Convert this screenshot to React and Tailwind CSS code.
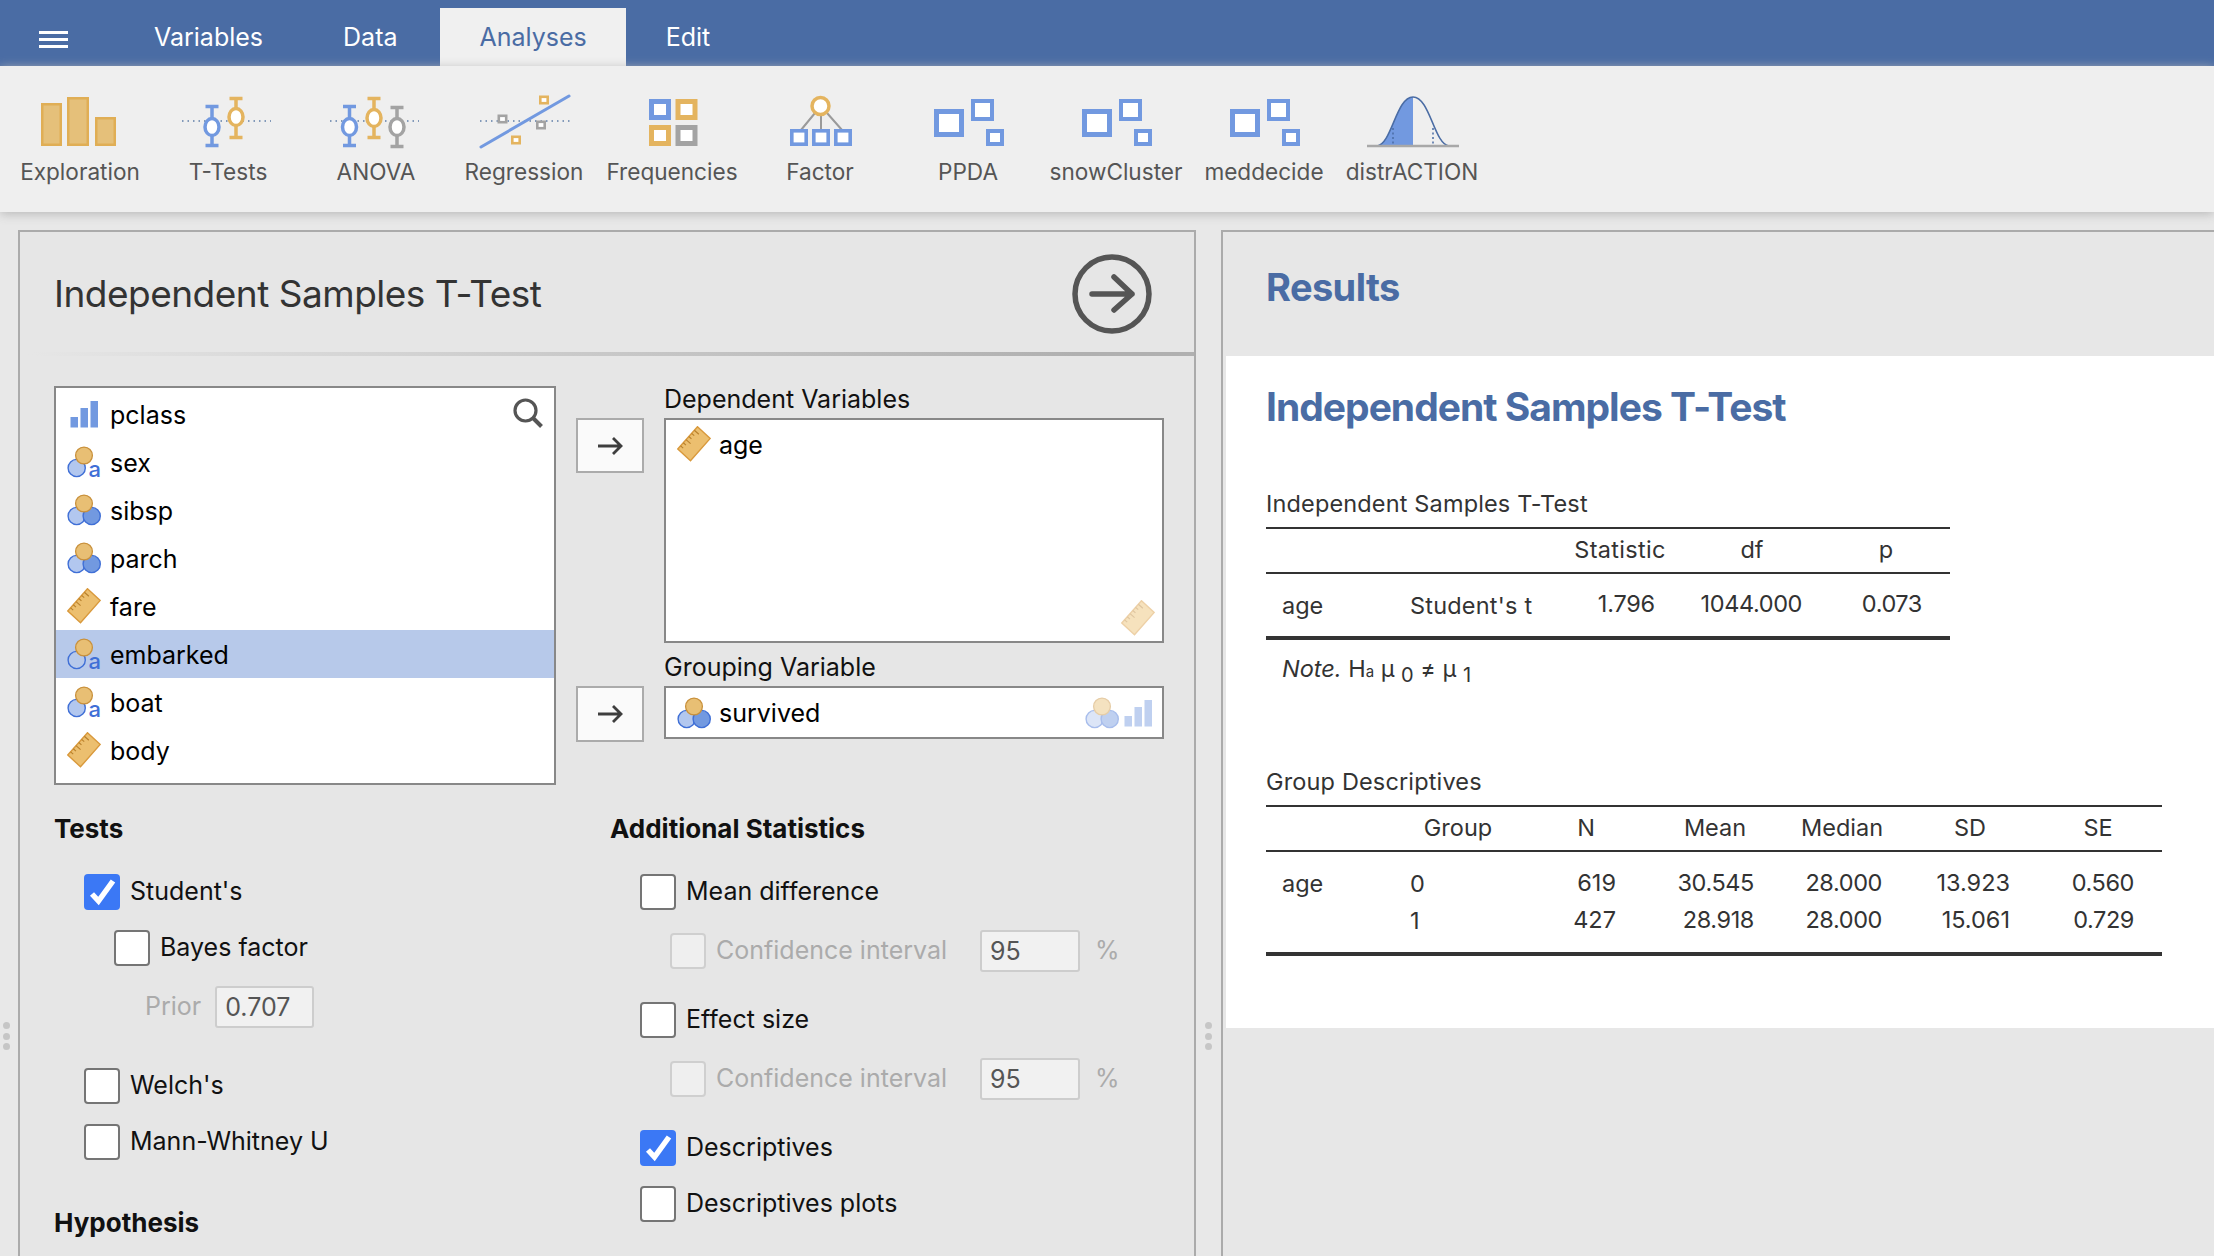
import React from "react";

const BLUE = "#7299e0";
const ORANGE = "#e4b45f";
const GRAY = "#a3a3a3";

function RibbonIcon({ i, children }) {
  const x = 6 + 148 * i;
  return (
    <svg className="block w-[148px] h-[70px] shrink-0" viewBox={`${x} 80 148 70`} fill="none">
      {children}
    </svg>
  );
}

function Bar({ x, top, bottom, color, cy }) {
  return (
    <g stroke={color}>
      <path d={`M${x} ${top}V${bottom}M${x - 6.5} ${top + 1.5}H${x + 6.5}M${x - 6.5} ${bottom - 1.5}H${x + 6.5}`} strokeWidth="3.5" />
      <ellipse cx={x} cy={cy} rx="7" ry="8.5" strokeWidth="3.5" fill="#fff" />
    </g>
  );
}

function Sq({ x, y, w, h, color, s = 4 }) {
  return <rect x={x + s / 2} y={y + s / 2} width={w - s} height={h - s} stroke={color} strokeWidth={s} fill="#fff" />;
}

function Dots({ x1, x2 }) {
  return <path d={`M${x1} 121H${x2}`} stroke="#5f7da8" strokeWidth="1.4" strokeDasharray="1.5 4" />;
}

function Clusters({ dx }) {
  return (
    <>
      <Sq x={934 + dx} y={109} w={30} h={28} color={BLUE} s={5} />
      <Sq x={971 + dx} y={99} w={23} h={22} color={BLUE} s={4} />
      <Sq x={986 + dx} y={129} w={18} h={17} color={BLUE} s={4} />
    </>
  );
}

const ribbon = [
  {
    label: "Exploration",
    art: (
      <>
        {[
          [41, 103, 21],
          [67, 97, 22],
          [95, 117, 21],
        ].map(([x, y, w]) => (
          <rect key={x} x={x + 1.25} y={y + 1.25} width={w - 2.5} height={146 - y - 2.5} fill="#e5c07a" stroke="#e0ae55" strokeWidth="2.5" />
        ))}
      </>
    ),
  },
  {
    label: "T-Tests",
    art: (
      <>
        <Dots x1={182} x2={271} />
        <Bar x={212} top={105} bottom={147} color={BLUE} cy={127} />
        <Bar x={236} top={97} bottom={139} color={ORANGE} cy={117} />
      </>
    ),
  },
  {
    label: "ANOVA",
    art: (
      <>
        <Dots x1={330} x2={419} />
        <Bar x={349.5} top={105} bottom={147} color={BLUE} cy={127} />
        <Bar x={374} top={97} bottom={139} color={ORANGE} cy={118} />
        <Bar x={397} top={106} bottom={148} color={GRAY} cy={127} />
      </>
    ),
  },
  {
    label: "Regression",
    art: (
      <>
        <Dots x1={480} x2={570} />
        <path d="M481 147L569 96" stroke={BLUE} strokeWidth="3" strokeLinecap="round" />
        <Sq x={497.5} y={114.5} w={10} h={9} color={GRAY} s={2.6} />
        <Sq x={539} y={95.5} w={10} h={9} color={ORANGE} s={2.6} />
        <Sq x={536} y={120.5} w={10} h={9} color={GRAY} s={2.6} />
        <Sq x={511} y={135.5} w={10} h={9} color={ORANGE} s={2.6} />
      </>
    ),
  },
  {
    label: "Frequencies",
    art: (
      <>
        <Sq x={649} y={99} w={22} h={21} color={BLUE} s={5} />
        <Sq x={675.5} y={99} w={22} h={21} color={ORANGE} s={5} />
        <Sq x={649} y={125} w={22} h={21} color={ORANGE} s={5} />
        <Sq x={675.5} y={125} w={22} h={21} color={GRAY} s={5} />
      </>
    ),
  },
  {
    label: "Factor",
    art: (
      <>
        <path d="M815 113L801 130M821 114V130M827 113L842 130" stroke="#9a9a9a" strokeWidth="2" />
        <ellipse cx="820.5" cy="106" rx="8.5" ry="8.5" stroke={ORANGE} strokeWidth="3.5" fill="#fff" />
        <Sq x={790} y={129} w={18} h={17} color={BLUE} s={3.6} />
        <Sq x={812} y={129} w={18} h={17} color={BLUE} s={3.6} />
        <Sq x={834} y={129} w={18} h={17} color={BLUE} s={3.6} />
      </>
    ),
  },
  { label: "PPDA", art: <Clusters dx={0} /> },
  { label: "snowCluster", art: <Clusters dx={148} /> },
  { label: "meddecide", art: <Clusters dx={296} /> },
  {
    label: "distrACTION",
    art: (
      <>
        <path d="M1377 146C1392 144 1396 97 1413 97V146Z" fill={BLUE} />
        <path d="M1377 146C1392 144 1396 97 1413 97C1430 97 1434 144 1449 146" stroke="#4a6ca4" strokeWidth="1.5" />
        <path d="M1393 128V146M1433 128V146" stroke="#4a6ca4" strokeWidth="1.5" strokeDasharray="2 2.5" />
        <path d="M1367 146H1459" stroke="#a8a8a8" strokeWidth="2.5" />
      </>
    ),
  },
];

function Ruler({ className = "" }) {
  const ticks = [0.14, 0.28, 0.42, 0.56, 0.7, 0.84];
  return (
    <svg className={`shrink-0 w-[34px] h-[36px] ${className}`} viewBox="0 0 34 36" fill="none">
      <path d="M20.5 0.7L33.2 12.4L13.5 34.8L0.8 23Z" fill="#ecbf6f" stroke="#d9993c" strokeWidth="1.4" />
      {ticks.map((t, k) => {
        const x = 0.8 + 19.7 * t;
        const y = 23 - 22.3 * t;
        const len = k % 3 === 2 ? 6 : 3.5;
        return <path key={t} d={`M${x} ${y}l${len * 0.75} ${len * 0.66}`} stroke="#b8802c" strokeWidth="1.1" />;
      })}
    </svg>
  );
}

function Nominal({ text = false, hollow = false, className = "" }) {
  return (
    <svg className={`shrink-0 w-[34px] h-[32px] overflow-visible ${className}`} viewBox="0 0 34 32" fill="none">
      <circle cx="9.7" cy="22" r="8.6" fill={hollow ? "none" : "#b2c7ef"} stroke="#3f6fd6" strokeWidth="1.4" />
      {text ? (
        <text x="21.5" y="31" fontSize="22" fontWeight="500" fill="#3f6fd6" fontFamily="Inter, sans-serif">
          a
        </text>
      ) : (
        <circle cx="24.7" cy="22" r="8.6" fill={BLUE} stroke="#3f6fd6" strokeWidth="1.4" />
      )}
      <circle cx="17" cy="9.5" r="8.4" fill="#e8bf74" stroke="#c9913c" strokeWidth="1.3" />
    </svg>
  );
}

function Ordinal({ className = "" }) {
  return (
    <svg className={`shrink-0 w-[28px] h-[28px] ${className}`} viewBox="0 0 28 28">
      <rect x="0.5" y="17" width="7.5" height="10.5" fill={BLUE} />
      <rect x="10.5" y="8" width="7.5" height="19.5" fill={BLUE} />
      <rect x="20.5" y="1" width="7.5" height="26.5" fill={BLUE} />
    </svg>
  );
}

function VarRow({ name, icon, active }) {
  return (
    <div className={`flex h-[48px] items-center pl-[11px] ${active ? "bg-[#b7c9ea]" : ""}`}>
      <span className="flex w-[43px] shrink-0 items-center">{icon}</span>
      <span className="pt-[2px] text-[25px] leading-none text-black">{name}</span>
    </div>
  );
}

function ArrowBtn({ h }) {
  return (
    <div className={`flex w-[68px] items-center justify-center border-2 border-[#ababab] bg-[#fafafa] ${h}`}>
      <svg className="h-[20px] w-[26px]" viewBox="0 0 26 20" fill="none" stroke="#3e3e3e" strokeWidth="2.8">
        <path d="M1 10H24M16 2L24 10L16 18" />
      </svg>
    </div>
  );
}

function Check({ on, disabled, label, className = "" }) {
  return (
    <div className={`flex h-[36px] items-center gap-[10px] ${className}`}>
      {on ? (
        <span className="flex h-[36px] w-[36px] shrink-0 items-center justify-center rounded-[4px] bg-[#3b78f5]">
          <svg className="h-[36px] w-[36px]" viewBox="0 0 36 36" fill="none" stroke="#fff" strokeWidth="5.5">
            <path d="M8 20L14.5 27L29 7" />
          </svg>
        </span>
      ) : disabled ? (
        <span className="h-[36px] w-[36px] shrink-0 rounded-[4px] border-2 border-[#cfcfcf] bg-[#efefef]" />
      ) : (
        <span className="h-[36px] w-[36px] shrink-0 rounded-[4px] border-2 border-[#757575] bg-white" />
      )}
      <span className={`pb-[2px] text-[25px] leading-none ${disabled ? "text-[#ababab]" : "text-[#111]"}`}>{label}</span>
    </div>
  );
}

function Field({ value, w }) {
  return (
    <div className={`flex h-[42px] items-center rounded-[3px] border-2 border-[#cdcdcd] bg-[#f1f1f1] pl-[8px] text-[25px] leading-none text-[#555] ${w}`}>
      {value}
    </div>
  );
}

function CiRow() {
  return (
    <div className="mt-[20px] ml-[60px] flex h-[42px] items-center">
      <Check disabled label="Confidence interval" className="w-[310px]" />
      <Field value="95" w="w-[100px]" />
      <span className="ml-[15px] pb-[2px] text-[25px] leading-none text-[#ababab]">%</span>
    </div>
  );
}

function Gutter({ className }) {
  return (
    <div className={`flex shrink-0 flex-col gap-[3.5px] pt-[810px] ${className}`}>
      <span className="h-[7px] w-[7px] rounded-full bg-[#c6c6c6]" />
      <span className="h-[7px] w-[7px] rounded-full bg-[#c6c6c6]" />
      <span className="h-[7px] w-[7px] rounded-full bg-[#c6c6c6]" />
    </div>
  );
}

const t1Cols = "grid grid-cols-[134px_162px_116px_148px_124px]";
const t2Cols = "grid grid-cols-[134px_116px_140px_118px_136px_120px_132px]";

function ResultTables() {
  return (
    <div className="text-[23.5px] leading-none text-[#333]">
      <div className="mt-[60px] h-[28px] leading-[28px] tracking-[0.15px]">Independent Samples T-Test</div>
      <div className="mt-[9px] w-[684px]">
        <div className="h-[2px] bg-[#333]" />
        <div className={`${t1Cols} h-[43px] items-center pb-[2px]`}>
          <span />
          <span />
          <span className="text-center tracking-[0.3px]">Statistic</span>
          <span className="text-center">df</span>
          <span className="pr-[4px] text-center">p</span>
        </div>
        <div className="h-[2px] bg-[#333]" />
        <div className={`${t1Cols} h-[62px] items-center`}>
          <span className="pt-[2px] pl-[16px]">age</span>
          <span className="pt-[2px] pl-[10px] tracking-[0.2px]">Student's t</span>
          <span className="pr-[23px] pb-[2px] text-right tracking-[-0.2px]">1.796</span>
          <span className="pr-[24px] pb-[2px] text-right tracking-[-0.4px]">1044.000</span>
          <span className="pr-[28px] pb-[2px] text-right tracking-[-0.4px]">0.073</span>
        </div>
        <div className="h-[4px] bg-[#333]" />
        <div className="mt-[15px] h-[28px] pl-[16px] leading-[28px]">
          <i>Note.</i> H<span className="text-[15px]">a</span> µ <sub className="text-[20px]">0</sub> ≠ µ <sub className="text-[20px]">1</sub>
        </div>
      </div>
      <div className="mt-[85px] h-[28px] leading-[28px] tracking-[0.15px]">Group Descriptives</div>
      <div className="mt-[9px] w-[896px]">
        <div className="h-[2px] bg-[#333]" />
        <div className={`${t2Cols} h-[43px] items-center pb-[2px] text-center`}>
          <span />
          <span>Group</span>
          <span>N</span>
          <span>Mean</span>
          <span>Median</span>
          <span>SD</span>
          <span className="pl-[4px]">SE</span>
        </div>
        <div className="h-[2px] bg-[#333]" />
        <div className="pt-[13px] pb-[13px]">
          {[
            ["age", "0", "619", "30.545", "28.000", "13.923", "0.560"],
            ["", "1", "427", "28.918", "28.000", "15.061", "0.729"],
          ].map((r) => (
            <div key={r[1]} className={`${t2Cols} h-[37px] items-center`}>
              <span className="pt-[1px] pl-[16px]">{r[0]}</span>
              <span className="pt-[1px] pl-[10px]">{r[1]}</span>
              <span className="pr-[40px] pb-[1px] text-right">{r[2]}</span>
              <span className="pr-[20px] pb-[1px] text-right tracking-[-0.4px]">{r[3]}</span>
              <span className="pr-[28px] pb-[1px] text-right tracking-[-0.4px]">{r[4]}</span>
              <span className="pr-[20px] pb-[1px] text-right">{r[5]}</span>
              <span className="pr-[28px] pb-[1px] text-right tracking-[-0.4px]">{r[6]}</span>
            </div>
          ))}
        </div>
        <div className="h-[4px] bg-[#333]" />
      </div>
    </div>
  );
}

export default function App() {
  return (
    <div className="flex h-[1256px] w-[2214px] flex-col overflow-hidden bg-[#e8e8e8] font-['Inter',sans-serif]">
      <div className="flex h-[66px] shrink-0 items-end bg-[#4a6ca4] text-[25px] leading-none text-white">
        <div className="flex h-full w-[115px] flex-col justify-center gap-[4px] pt-[13px] pl-[39px]">
          <span className="h-[3px] w-[29px] bg-white" />
          <span className="h-[3px] w-[29px] bg-white" />
          <span className="h-[3px] w-[29px] bg-white" />
        </div>
        <div className="flex h-[58px] items-center px-[39px]">Variables</div>
        <div className="flex h-[58px] items-center pr-[43px] pl-[41px]">Data</div>
        <div className="flex h-[58px] items-center bg-[#f0f0f0] px-[39px] text-[#4a6ca4]">Analyses</div>
        <div className="flex h-[58px] items-center px-[40px]">Edit</div>
      </div>

      <div className="relative z-10 flex h-[146px] shrink-0 bg-[#efefef] pl-[6px] shadow-[0_2px_10px_#b8b8b8]">
        {ribbon.map((b, i) => (
          <div key={b.label} className="flex w-[148px] shrink-0 flex-col items-center pt-[14px]">
            <RibbonIcon i={i}>{b.art}</RibbonIcon>
            <div className="mt-[8px] whitespace-nowrap text-[22.6px] leading-[28px] text-[#555]">{b.label}</div>
          </div>
        ))}
      </div>

      <div className="flex min-h-0 flex-1">
        <Gutter className="w-[18px] pl-[2.5px]" />
        <div className="mt-[18px] flex h-[1026px] w-[1178px] shrink-0 flex-col border-x-2 border-t-2 border-[#ababab] bg-[#e6e6e6]">
          <div className="flex h-[120px] shrink-0 items-center justify-between pt-[3px] pr-[42px] pl-[34px]">
            <div className="text-[37px] leading-none tracking-[-0.5px] text-[#333]">Independent Samples T-Test</div>
            <svg className="h-[80px] w-[80px]" viewBox="0 0 80 80" fill="none" stroke="#555" strokeLinecap="round" strokeLinejoin="round">
              <circle cx="40" cy="40" r="37" strokeWidth="5.5" />
              <path d="M20 40H60M42 23L60 40L42 56" strokeWidth="5.5" />
            </svg>
          </div>
          <div className="h-[4px] shrink-0 bg-gradient-to-r from-[#e6e6e6] from-[1%] to-[#b0b0b0] to-[90%]" />
          <div className="flex pt-[30px] pl-[34px]">
            <div className="relative h-[399px] w-[502px] shrink-0 border-2 border-[#888] bg-white pt-[2px]">
              <VarRow name="pclass" icon={<Ordinal className="ml-[3px]" />} />
              <VarRow name="sex" icon={<Nominal text />} />
              <VarRow name="sibsp" icon={<Nominal />} />
              <VarRow name="parch" icon={<Nominal />} />
              <VarRow name="fare" icon={<Ruler />} />
              <VarRow name="embarked" icon={<Nominal text hollow />} active />
              <VarRow name="boat" icon={<Nominal text />} />
              <VarRow name="body" icon={<Ruler />} />
              <svg className="absolute top-[10px] right-[11px] h-[30px] w-[30px]" viewBox="0 0 30 30" fill="none" stroke="#555" strokeWidth="3.2">
                <circle cx="12.5" cy="12.5" r="10.5" />
                <path d="M20 20L28.5 28.5" strokeWidth="4" />
              </svg>
            </div>
            <div className="ml-[20px] flex flex-col">
              <div className="flex gap-[20px]">
                <div className="pt-[32px]">
                  <ArrowBtn h="h-[55px]" />
                </div>
                <div>
                  <div className="h-[26px] text-[25px] leading-[26px] text-[#111]">Dependent Variables</div>
                  <div className="relative mt-[6px] flex h-[225px] w-[500px] items-start border-2 border-[#888] bg-white pt-[6px] pl-[11px]">
                    <Ruler />
                    <span className="mt-[7px] ml-[8px] text-[25px] leading-none text-black">age</span>
                    <Ruler className="absolute right-[7px] bottom-[5px] opacity-45" />
                  </div>
                </div>
              </div>
              <div className="mt-[11px] flex gap-[20px]">
                <div className="pt-[32px]">
                  <ArrowBtn h="h-[56px]" />
                </div>
                <div>
                  <div className="h-[26px] text-[25px] leading-[26px] text-[#111]">Grouping Variable</div>
                  <div className="mt-[6px] flex h-[53px] w-[500px] items-center border-2 border-[#888] bg-white pr-[10px] pl-[11px]">
                    <Nominal />
                    <span className="ml-[8px] flex-1 pt-[1px] text-[25px] leading-none text-black">survived</span>
                    <Nominal className="opacity-45" />
                    <Ordinal className="ml-[5px] opacity-45" />
                  </div>
                </div>
              </div>
            </div>
          </div>

          <div className="flex pt-[29px] pl-[34px]">
            <div className="w-[556px] shrink-0">
              <div className="h-[30px] text-[26px] leading-[30px] font-bold text-[#111]">Tests</div>
              <Check on label="Student's" className="mt-[30px] ml-[30px]" />
              <Check label="Bayes factor" className="mt-[20px] ml-[60px]" />
              <div className="mt-[20px] ml-[91px] flex h-[42px] items-center gap-[14px]">
                <span className="pb-[2px] text-[25px] leading-none text-[#ababab]">Prior</span>
                <Field value="0.707" w="w-[99px]" />
              </div>
              <Check label="Welch's" className="mt-[40px] ml-[30px]" />
              <Check label="Mann-Whitney U" className="mt-[20px] ml-[30px]" />
              <div className="mt-[48px] h-[30px] text-[26px] leading-[30px] font-bold text-[#111]">Hypothesis</div>
            </div>
            <div className="flex-1">
              <div className="h-[30px] text-[26px] leading-[30px] font-bold text-[#111]">Additional Statistics</div>
              <Check label="Mean difference" className="mt-[30px] ml-[30px]" />
              <CiRow />
              <Check label="Effect size" className="mt-[30px] ml-[30px]" />
              <CiRow />
              <Check on label="Descriptives" className="mt-[30px] ml-[30px]" />
              <Check label="Descriptives plots" className="mt-[20px] ml-[30px]" />
            </div>
          </div>
        </div>

        <Gutter className="w-[25px] items-center" />

        <div className="mt-[18px] min-w-0 flex-1 border-t-2 border-l-2 border-[#ababab] bg-[#e7e7e7]">
          <div className="flex h-[124px] items-start pt-[34px] pl-[43px] text-[38px] leading-[42px] font-bold tracking-[-0.6px] text-[#4a6ca4]">Results</div>
          <div className="ml-[3px] h-[672px] bg-white pt-[28px] pl-[40px]">
            <div className="text-[39px] leading-[46px] font-bold tracking-[-1px] text-[#4a6ca4]">Independent Samples T-Test</div>
            <ResultTables />
          </div>
        </div>
      </div>
    </div>
  );
}
